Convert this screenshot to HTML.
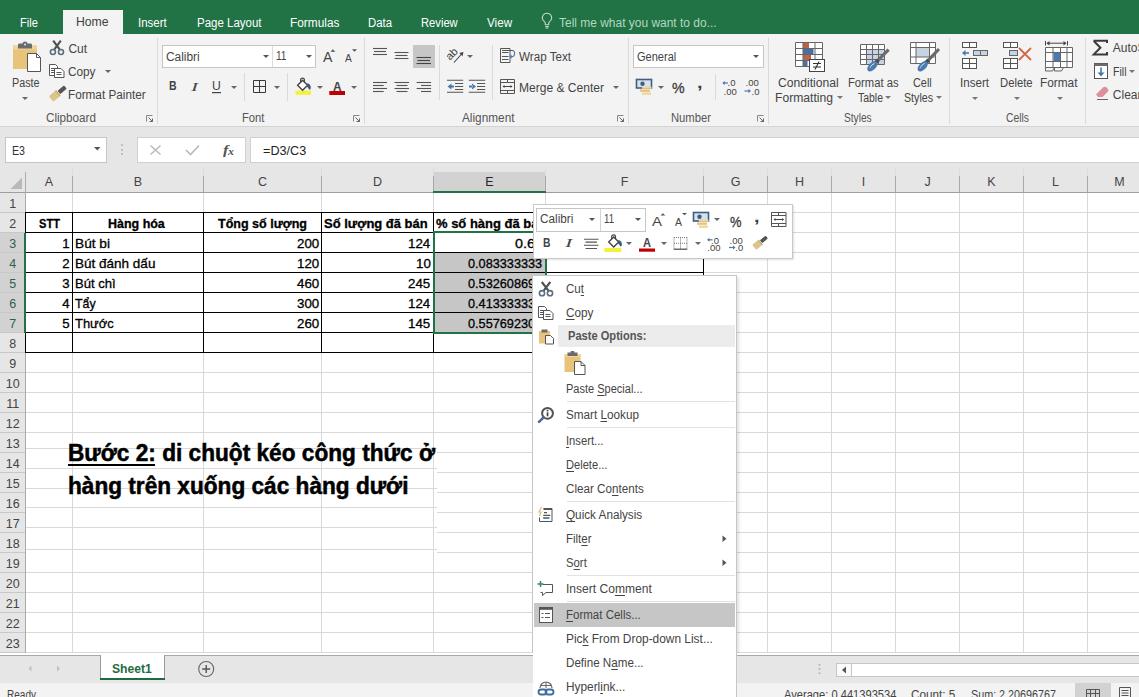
<!DOCTYPE html><html><head><meta charset="utf-8"><style>
html,body{margin:0;padding:0;width:1139px;height:697px;overflow:hidden;background:#fff;font-family:"Liberation Sans",sans-serif}
u{text-decoration-thickness:1px;text-underline-offset:2px}
</style></head><body><div style="position:relative;width:1139px;height:697px;overflow:hidden"><div style="position:absolute;left:0px;top:0px;width:1139px;height:34px;background:#217346;"></div><div style="position:absolute;left:63px;top:10px;width:60px;height:24px;background:#f3f3f3;"></div><div class="tx" id="t0" style="position:absolute;left:20.40px;top:17.00px;font-size:12.5px;line-height:1;white-space:nowrap;color:#ffffff;font-weight:normal;font-family:'Liberation Sans', sans-serif;transform-origin:0 0;transform:scaleX(0.8831);">File</div><div class="tx" id="t1" style="position:absolute;left:138.00px;top:17.00px;font-size:12.5px;line-height:1;white-space:nowrap;color:#ffffff;font-weight:normal;font-family:'Liberation Sans', sans-serif;transform-origin:0 0;transform:scaleX(0.9179);">Insert</div><div class="tx" id="t2" style="position:absolute;left:196.50px;top:17.00px;font-size:12.5px;line-height:1;white-space:nowrap;color:#ffffff;font-weight:normal;font-family:'Liberation Sans', sans-serif;transform-origin:0 0;transform:scaleX(0.9188);">Page Layout</div><div class="tx" id="t3" style="position:absolute;left:289.70px;top:17.00px;font-size:12.5px;line-height:1;white-space:nowrap;color:#ffffff;font-weight:normal;font-family:'Liberation Sans', sans-serif;transform-origin:0 0;transform:scaleX(0.9483);">Formulas</div><div class="tx" id="t4" style="position:absolute;left:368.00px;top:17.00px;font-size:12.5px;line-height:1;white-space:nowrap;color:#ffffff;font-weight:normal;font-family:'Liberation Sans', sans-serif;transform-origin:0 0;transform:scaleX(0.9089);">Data</div><div class="tx" id="t5" style="position:absolute;left:421.00px;top:17.00px;font-size:12.5px;line-height:1;white-space:nowrap;color:#ffffff;font-weight:normal;font-family:'Liberation Sans', sans-serif;transform-origin:0 0;transform:scaleX(0.8951);">Review</div><div class="tx" id="t6" style="position:absolute;left:486.60px;top:17.00px;font-size:12.5px;line-height:1;white-space:nowrap;color:#ffffff;font-weight:normal;font-family:'Liberation Sans', sans-serif;transform-origin:0 0;transform:scaleX(0.9340);">View</div><div class="tx" id="t7" style="position:absolute;left:76.40px;top:16.00px;font-size:12.5px;line-height:1;white-space:nowrap;color:#3f3f3f;font-weight:normal;font-family:'Liberation Sans', sans-serif;transform-origin:0 0;transform:scaleX(0.9777);">Home</div><svg style="position:absolute;left:541px;top:12px;" width="12" height="17" viewBox="0 0 12 17"><path d="M6 1.2a4.6 4.6 0 0 0-2.6 8.4c.6.5.9 1.1.9 1.8v1.4h3.4v-1.4c0-.7.3-1.3.9-1.8A4.6 4.6 0 0 0 6 1.2z" fill="none" stroke="#c3dccd" stroke-width="1.1"/><path d="M4.2 14.6h3.6M4.6 16h2.8" stroke="#c3dccd" stroke-width="1"/></svg><div class="tx" id="t8" style="position:absolute;left:558.90px;top:17.00px;font-size:12.5px;line-height:1;white-space:nowrap;color:#b3d7c0;font-weight:normal;font-family:'Liberation Sans', sans-serif;transform-origin:0 0;transform:scaleX(0.9571);">Tell me what you want to do...</div><div style="position:absolute;left:0px;top:34px;width:1139px;height:92px;background:#f3f3f3;"></div><div style="position:absolute;left:0px;top:126px;width:1139px;height:1px;background:#d4d4d4;"></div><div style="position:absolute;left:157px;top:38px;width:1px;height:86px;background:#dadada;"></div><div style="position:absolute;left:364px;top:38px;width:1px;height:86px;background:#dadada;"></div><div style="position:absolute;left:628px;top:38px;width:1px;height:86px;background:#dadada;"></div><div style="position:absolute;left:768px;top:38px;width:1px;height:86px;background:#dadada;"></div><div style="position:absolute;left:949px;top:38px;width:1px;height:86px;background:#dadada;"></div><div style="position:absolute;left:1085px;top:38px;width:1px;height:86px;background:#dadada;"></div><div class="tx" id="t9" style="position:absolute;left:11.50px;top:77.00px;font-size:12px;line-height:1;white-space:nowrap;color:#444;font-weight:normal;font-family:'Liberation Sans', sans-serif;transform-origin:0 0;transform:scaleX(0.8961);">Paste</div><svg style="position:absolute;left:22px;top:97.0px" width="6" height="3" viewBox="0 0 6 3"><path d="M0 0H6L3 3Z" fill="#666"/></svg><div class="tx" id="t10" style="position:absolute;left:68.40px;top:43.00px;font-size:12px;line-height:1;white-space:nowrap;color:#444;font-weight:normal;font-family:'Liberation Sans', sans-serif;transform-origin:0 0;">Cut</div><div class="tx" id="t11" style="position:absolute;left:68.40px;top:66.00px;font-size:12px;line-height:1;white-space:nowrap;color:#444;font-weight:normal;font-family:'Liberation Sans', sans-serif;transform-origin:0 0;transform:scaleX(0.9816);">Copy</div><svg style="position:absolute;left:105px;top:69.5px" width="6" height="3" viewBox="0 0 6 3"><path d="M0 0H6L3 3Z" fill="#666"/></svg><div class="tx" id="t12" style="position:absolute;left:68.40px;top:89.00px;font-size:12px;line-height:1;white-space:nowrap;color:#444;font-weight:normal;font-family:'Liberation Sans', sans-serif;transform-origin:0 0;transform:scaleX(0.9778);">Format Painter</div><div class="tx" id="t13" style="position:absolute;left:45.60px;top:112.00px;font-size:12px;line-height:1;white-space:nowrap;color:#555;font-weight:normal;font-family:'Liberation Sans', sans-serif;transform-origin:0 0;transform:scaleX(0.9713);">Clipboard</div><div style="position:absolute;left:162px;top:45px;width:154px;height:23px;box-sizing:border-box;background:#fff;border:1px solid #c6c6c6"></div><div style="position:absolute;left:272px;top:46px;width:1px;height:21px;background:#dcdcdc;"></div><div class="tx" id="t14" style="position:absolute;left:165.50px;top:51.00px;font-size:12.5px;line-height:1;white-space:nowrap;color:#444;font-weight:normal;font-family:'Liberation Sans', sans-serif;transform-origin:0 0;transform:scaleX(0.9510);">Calibri</div><svg style="position:absolute;left:262.5px;top:54.8px" width="6" height="3" viewBox="0 0 6 3"><path d="M0 0H6L3 3Z" fill="#555"/></svg><div class="tx" id="t15" style="position:absolute;left:276.40px;top:50.00px;font-size:12.5px;line-height:1;white-space:nowrap;color:#444;font-weight:normal;font-family:'Liberation Sans', sans-serif;transform-origin:0 0;transform:scaleX(0.8087);">11</div><svg style="position:absolute;left:305.5px;top:54.8px" width="6" height="3" viewBox="0 0 6 3"><path d="M0 0H6L3 3Z" fill="#555"/></svg><div class="tx" id="t16" style="position:absolute;left:322.60px;top:50.00px;font-size:14px;line-height:1;white-space:nowrap;color:#444;font-weight:normal;font-family:'Liberation Sans', sans-serif;transform-origin:0 0;transform:scaleX(1.0060);">A</div><div class="tx" id="t17" style="position:absolute;left:345.30px;top:53.00px;font-size:11px;line-height:1;white-space:nowrap;color:#444;font-weight:normal;font-family:'Liberation Sans', sans-serif;transform-origin:0 0;transform:scaleX(0.9260);">A</div><div class="tx" id="t18" style="position:absolute;left:168.70px;top:80.00px;font-size:12.5px;line-height:1;white-space:nowrap;color:#444;font-weight:bold;font-family:'Liberation Sans', sans-serif;transform-origin:0 0;transform:scaleX(0.8415);">B</div><div class="tx" id="t19" style="position:absolute;left:190.80px;top:80.00px;font-size:13px;line-height:1;white-space:nowrap;color:#444;font-weight:normal;font-family:'Liberation Serif', serif;transform-origin:0 0;transform:scaleX(1.6345);font-style:italic;">I</div><div class="tx" id="t20" style="position:absolute;left:212.00px;top:80.00px;font-size:12.5px;line-height:1;white-space:nowrap;color:#444;font-weight:normal;font-family:'Liberation Sans', sans-serif;transform-origin:0 0;transform:scaleX(0.9744);">U</div><svg style="position:absolute;left:230.5px;top:86.0px" width="6" height="3" viewBox="0 0 6 3"><path d="M0 0H6L3 3Z" fill="#666"/></svg><div style="position:absolute;left:244px;top:73px;width:1px;height:28px;background:#dadada;"></div><svg style="position:absolute;left:273.6px;top:85.5px" width="6" height="3" viewBox="0 0 6 3"><path d="M0 0H6L3 3Z" fill="#666"/></svg><div style="position:absolute;left:287px;top:73px;width:1px;height:28px;background:#dadada;"></div><svg style="position:absolute;left:316.8px;top:85.5px" width="6" height="3" viewBox="0 0 6 3"><path d="M0 0H6L3 3Z" fill="#666"/></svg><div class="tx" id="t21" style="position:absolute;left:332.80px;top:80.00px;font-size:13px;line-height:1;white-space:nowrap;color:#444;font-weight:bold;font-family:'Liberation Sans', sans-serif;transform-origin:0 0;transform:scaleX(0.9158);">A</div><svg style="position:absolute;left:351px;top:85.5px" width="6" height="3" viewBox="0 0 6 3"><path d="M0 0H6L3 3Z" fill="#666"/></svg><div class="tx" id="t22" style="position:absolute;left:241.60px;top:112.00px;font-size:12px;line-height:1;white-space:nowrap;color:#555;font-weight:normal;font-family:'Liberation Sans', sans-serif;transform-origin:0 0;transform:scaleX(0.9369);">Font</div><div style="position:absolute;left:413px;top:45px;width:22px;height:23px;background:#c6c6c6;"></div><div style="position:absolute;left:439px;top:45px;width:1px;height:55px;background:#dadada;"></div><svg style="position:absolute;left:466.7px;top:54.5px" width="6" height="3" viewBox="0 0 6 3"><path d="M0 0H6L3 3Z" fill="#666"/></svg><div style="position:absolute;left:492px;top:45px;width:1px;height:55px;background:#dadada;"></div><div class="tx" id="t23" style="position:absolute;left:519.00px;top:51.00px;font-size:12px;line-height:1;white-space:nowrap;color:#444;font-weight:normal;font-family:'Liberation Sans', sans-serif;transform-origin:0 0;transform:scaleX(0.9705);">Wrap Text</div><div class="tx" id="t24" style="position:absolute;left:519.00px;top:82.00px;font-size:12px;line-height:1;white-space:nowrap;color:#444;font-weight:normal;font-family:'Liberation Sans', sans-serif;transform-origin:0 0;transform:scaleX(1.0035);">Merge &amp; Center</div><svg style="position:absolute;left:613px;top:85.5px" width="6" height="3" viewBox="0 0 6 3"><path d="M0 0H6L3 3Z" fill="#666"/></svg><div class="tx" id="t25" style="position:absolute;left:462.00px;top:112.00px;font-size:12px;line-height:1;white-space:nowrap;color:#555;font-weight:normal;font-family:'Liberation Sans', sans-serif;transform-origin:0 0;transform:scaleX(0.9836);">Alignment</div><div style="position:absolute;left:633px;top:45px;width:131px;height:23px;box-sizing:border-box;background:#fff;border:1px solid #c6c6c6"></div><div class="tx" id="t26" style="position:absolute;left:636.60px;top:51.00px;font-size:12.5px;line-height:1;white-space:nowrap;color:#444;font-weight:normal;font-family:'Liberation Sans', sans-serif;transform-origin:0 0;transform:scaleX(0.8835);">General</div><svg style="position:absolute;left:753px;top:54.8px" width="6" height="3" viewBox="0 0 6 3"><path d="M0 0H6L3 3Z" fill="#555"/></svg><svg style="position:absolute;left:657.7px;top:85.5px" width="6" height="3" viewBox="0 0 6 3"><path d="M0 0H6L3 3Z" fill="#666"/></svg><div class="tx" id="t27" style="position:absolute;left:672.00px;top:81.00px;font-size:14.5px;line-height:1;white-space:nowrap;color:#3a3a3a;font-weight:normal;font-family:'Liberation Sans', sans-serif;transform-origin:0 0;transform:scaleX(0.9763);-webkit-text-stroke:0.3px #3a3a3a;">%</div><div class="tx" id="t28" style="position:absolute;left:697.00px;top:75.00px;font-size:15px;line-height:1;white-space:nowrap;color:#3a3a3a;font-weight:bold;font-family:'Liberation Sans', sans-serif;transform-origin:0 0;transform:scaleX(1.3184);">,</div><div style="position:absolute;left:715px;top:74px;width:1px;height:26px;background:#dadada;"></div><div class="tx" id="t29" style="position:absolute;left:670.60px;top:112.00px;font-size:12px;line-height:1;white-space:nowrap;color:#555;font-weight:normal;font-family:'Liberation Sans', sans-serif;transform-origin:0 0;transform:scaleX(0.9370);">Number</div><div class="tx" id="t30" style="position:absolute;left:778.30px;top:77.00px;font-size:12px;line-height:1;white-space:nowrap;color:#444;font-weight:normal;font-family:'Liberation Sans', sans-serif;transform-origin:0 0;transform:scaleX(1.0109);">Conditional</div><div class="tx" id="t31" style="position:absolute;left:775.30px;top:92.00px;font-size:12px;line-height:1;white-space:nowrap;color:#444;font-weight:normal;font-family:'Liberation Sans', sans-serif;transform-origin:0 0;transform:scaleX(1.0112);">Formatting</div><svg style="position:absolute;left:837px;top:96.0px" width="6" height="3" viewBox="0 0 6 3"><path d="M0 0H6L3 3Z" fill="#777"/></svg><div class="tx" id="t32" style="position:absolute;left:847.50px;top:77.00px;font-size:12px;line-height:1;white-space:nowrap;color:#444;font-weight:normal;font-family:'Liberation Sans', sans-serif;transform-origin:0 0;transform:scaleX(0.9349);">Format as</div><div class="tx" id="t33" style="position:absolute;left:857.50px;top:92.00px;font-size:12px;line-height:1;white-space:nowrap;color:#444;font-weight:normal;font-family:'Liberation Sans', sans-serif;transform-origin:0 0;transform:scaleX(0.8715);">Table</div><svg style="position:absolute;left:885px;top:96.0px" width="6" height="3" viewBox="0 0 6 3"><path d="M0 0H6L3 3Z" fill="#777"/></svg><div class="tx" id="t34" style="position:absolute;left:913.00px;top:77.00px;font-size:12px;line-height:1;white-space:nowrap;color:#444;font-weight:normal;font-family:'Liberation Sans', sans-serif;transform-origin:0 0;transform:scaleX(0.9046);">Cell</div><div class="tx" id="t35" style="position:absolute;left:904.00px;top:92.00px;font-size:12px;line-height:1;white-space:nowrap;color:#444;font-weight:normal;font-family:'Liberation Sans', sans-serif;transform-origin:0 0;transform:scaleX(0.8872);">Styles</div><svg style="position:absolute;left:936px;top:96.0px" width="6" height="3" viewBox="0 0 6 3"><path d="M0 0H6L3 3Z" fill="#777"/></svg><div class="tx" id="t36" style="position:absolute;left:844.00px;top:112.00px;font-size:12px;line-height:1;white-space:nowrap;color:#555;font-weight:normal;font-family:'Liberation Sans', sans-serif;transform-origin:0 0;transform:scaleX(0.8474);">Styles</div><div class="tx" id="t37" style="position:absolute;left:960.00px;top:77.00px;font-size:12px;line-height:1;white-space:nowrap;color:#444;font-weight:normal;font-family:'Liberation Sans', sans-serif;transform-origin:0 0;transform:scaleX(0.9662);">Insert</div><svg style="position:absolute;left:971.8px;top:96.9px" width="6" height="3" viewBox="0 0 6 3"><path d="M0 0H6L3 3Z" fill="#777"/></svg><div class="tx" id="t38" style="position:absolute;left:1000.40px;top:77.00px;font-size:12px;line-height:1;white-space:nowrap;color:#444;font-weight:normal;font-family:'Liberation Sans', sans-serif;transform-origin:0 0;transform:scaleX(0.9398);">Delete</div><svg style="position:absolute;left:1013.5px;top:96.9px" width="6" height="3" viewBox="0 0 6 3"><path d="M0 0H6L3 3Z" fill="#777"/></svg><div class="tx" id="t39" style="position:absolute;left:1040.40px;top:77.00px;font-size:12px;line-height:1;white-space:nowrap;color:#444;font-weight:normal;font-family:'Liberation Sans', sans-serif;transform-origin:0 0;transform:scaleX(0.9864);">Format</div><svg style="position:absolute;left:1056.5px;top:96.9px" width="6" height="3" viewBox="0 0 6 3"><path d="M0 0H6L3 3Z" fill="#777"/></svg><div class="tx" id="t40" style="position:absolute;left:1005.50px;top:112.00px;font-size:12px;line-height:1;white-space:nowrap;color:#555;font-weight:normal;font-family:'Liberation Sans', sans-serif;transform-origin:0 0;transform:scaleX(0.8623);">Cells</div><div class="tx" id="t41" style="position:absolute;left:1112.80px;top:42.00px;font-size:12px;line-height:1;white-space:nowrap;color:#444;font-weight:normal;font-family:'Liberation Sans', sans-serif;transform-origin:0 0;">AutoSum</div><div class="tx" id="t42" style="position:absolute;left:1112.80px;top:66.00px;font-size:12px;line-height:1;white-space:nowrap;color:#444;font-weight:normal;font-family:'Liberation Sans', sans-serif;transform-origin:0 0;transform:scaleX(0.8807);">Fill</div><svg style="position:absolute;left:1129.4px;top:69.5px" width="6" height="3" viewBox="0 0 6 3"><path d="M0 0H6L3 3Z" fill="#777"/></svg><div class="tx" id="t43" style="position:absolute;left:1112.80px;top:89.00px;font-size:12px;line-height:1;white-space:nowrap;color:#444;font-weight:normal;font-family:'Liberation Sans', sans-serif;transform-origin:0 0;">Clear</div><svg style="position:absolute;left:0;top:0" width="1139" height="697"><rect x="13" y="45.5" width="24" height="23.5" fill="#e8c37c"/><rect x="13" y="45.5" width="24" height="4" fill="#f0d49a"/><path d="M18 48.5v-3.5c0-.8.6-1.5 1.5-1.5h3c.2-1.2 1.2-2 2.5-2s2.3.8 2.5 2h3c.9 0 1.5.7 1.5 1.5v3.5z" fill="#6b6b6b"/><circle cx="25" cy="44.6" r="1" fill="#e8e8e8"/><path d="M27.5 53.5h9l4 4v14h-13z" fill="#fff" stroke="#555"/><path d="M36.5 53.5v4h4" fill="none" stroke="#555"/><path d="M53.2 40.6L59.6 49.4M60.8 40.6L54.4 49.4" stroke="#505050" stroke-width="2.1"/><circle cx="52.9" cy="52" r="2.5" fill="none" stroke="#5b6f80" stroke-width="1.6"/><circle cx="61" cy="52" r="2.5" fill="none" stroke="#5b6f80" stroke-width="1.6"/><path d="M49.5 64.5h6l2 2v9h-8z" fill="#fff" stroke="#555"/><path d="M51 68.5h4M51 70.5h4M51 72.5h4" stroke="#555"/><path d="M54.5 68.5h6.5l3 3v6h-9.5z" fill="#fff" stroke="#555"/><path d="M56.5 72.5h5M56.5 74.5h5" stroke="#555"/><g transform="translate(58.5 92.8) rotate(-40)"><rect x="0.5" y="-2.2" width="8.5" height="4.4" rx="1" fill="#555"/><path d="M-8.5 -3.6h8.5v7.2h-8.5c-.8 0-1.2-.5-1.2-1.1v-5c0-.6.4-1.1 1.2-1.1z" fill="#dcc48e"/><path d="M-.8 -3.6v7.2" stroke="#c9ad6e" stroke-width="1.2"/></g><path d="M146.5 121.5v-6h6" fill="none" stroke="#888"/><path d="M148.5 117.5l4 4M149.5 121.5h3v-3" fill="none" stroke="#666"/><path d="M330.5 51.7l2.4-2.4 2.4 2.4z" fill="#555"/><path d="M352 49.2h5l-2.5 2.5z" fill="#555"/><rect x="212" y="92" width="9" height="1.2" fill="#444"/><path d="M253.5 80.5h12v12h-12zM259.5 80.5v12M253.5 86.5h12" fill="none" stroke="#3a3a3a"/><rect x="295.5" y="90.6" width="15.5" height="4.2" fill="#f2f23c"/><path d="M297.6 85.3l5-5 5 5-5 5z" fill="#fff" stroke="#444" stroke-width="1.4"/><path d="M300.6 82.2v-2.4c0-1.1.9-1.7 1.9-1.7s1.9.6 1.9 1.7v2.6" fill="none" stroke="#444" stroke-width="1.2"/><path d="M307.3 83.3c2.2.5 3.5 2.2 3.5 4.2 0 1.3-.7 2.3-1.5 2.3-.6-1.2-1.2-2.3-2.6-3.3z" fill="#3c5a78"/><rect x="329.3" y="91" width="15.7" height="4" fill="#c00000"/><path d="M353.5 121.5v-6h6" fill="none" stroke="#888"/><path d="M355.5 117.5l4 4M356.5 121.5h3v-3" fill="none" stroke="#666"/><path d="M373 48.5H387" stroke="#555" stroke-width="1.1"/><path d="M374 51.5H386" stroke="#555" stroke-width="1.1"/><path d="M373 54.5H387" stroke="#555" stroke-width="1.1"/><path d="M394.5 52.5H408.5" stroke="#555" stroke-width="1.1"/><path d="M395.5 55.5H407.5" stroke="#555" stroke-width="1.1"/><path d="M394.5 58.5H408.5" stroke="#555" stroke-width="1.1"/><path d="M416.5 57.5H431" stroke="#444" stroke-width="1.1"/><path d="M417.5 60.5H430" stroke="#444" stroke-width="1.1"/><path d="M416.5 63.5H431" stroke="#444" stroke-width="1.1"/><text x="0" y="0" transform="translate(450 60.8) rotate(-45)" font-family="Liberation Sans" font-size="11" fill="#3a3a3a">ab</text><path d="M454 62.5L462.5 53" stroke="#444" stroke-width="1.1"/><path d="M463.5 52l-4.2 1 3.2 3.2z" fill="#444"/><path d="M500.5 48.5h9.5v14h-9.5z" fill="none" stroke="#555"/><path d="M502 50.5h11.5M502 52.5h6.5M502 56.5h6.5M502 59.5h6.5" stroke="#555" stroke-width="1"/><path d="M513.3 50.8c1.8.8 1.8 5.2-.5 5.8h-2.3" fill="none" stroke="#4d7bab" stroke-width="1.2"/><path d="M509.3 56.6l2.3-2.1v4.2z" fill="#4d7bab"/><path d="M373 82.5H387" stroke="#555" stroke-width="1.1"/><path d="M373 85.5H383.7" stroke="#555" stroke-width="1.1"/><path d="M373 88.5H387" stroke="#555" stroke-width="1.1"/><path d="M373 91.5H383.7" stroke="#555" stroke-width="1.1"/><path d="M394.5 82.5H409" stroke="#555" stroke-width="1.1"/><path d="M396.5 85.5H407.5" stroke="#555" stroke-width="1.1"/><path d="M394.5 88.5H409" stroke="#555" stroke-width="1.1"/><path d="M396.5 91.5H407.5" stroke="#555" stroke-width="1.1"/><path d="M416.6 82.5H431.1" stroke="#555" stroke-width="1.1"/><path d="M421 85.5H431.1" stroke="#555" stroke-width="1.1"/><path d="M416.6 88.5H431.1" stroke="#555" stroke-width="1.1"/><path d="M421 91.5H431.1" stroke="#555" stroke-width="1.1"/><path d="M447 80.3h16.2M455 83.5h8.2M455 86.5h8.2M455 89.5h8.2M447 92.2h16.2" stroke="#555" stroke-width="1.1"/><path d="M447.5 86.5l4-3v6z M451 85.6h3v1.8h-3z" fill="#4a7aa8"/><path d="M468.8 80.3h16.4M477 83.5h8.2M477 86.5h8.2M477 89.5h8.2M468.8 92.2h16.4" stroke="#555" stroke-width="1.1"/><path d="M476 86.5l-4-3v6z M469 85.6h3.5v1.8H469z" fill="#4a7aa8"/><path d="M500.5 79.5h14v14h-14zM500.5 82.5h14M500.5 90.5h14M507.5 79.5v3M507.5 90.5v3" fill="none" stroke="#555"/><path d="M503 86.5h9" stroke="#444"/><path d="M502.5 86.5l2-1.6v3.2zM512.5 86.5l-2-1.6v3.2z" fill="#444"/><path d="M617.5 121.5v-6h6" fill="none" stroke="#888"/><path d="M619.5 117.5l4 4M620.5 121.5h3v-3" fill="none" stroke="#666"/><rect x="636.5" y="79.5" width="15" height="8.5" fill="#d6e3ee" stroke="#3f5f7f" stroke-width="1.6"/><circle cx="642.5" cy="83.7" r="2.2" fill="#3f5f7f"/><rect x="642" y="86.5" width="9.5" height="2.3" fill="#f0d49a"/><rect x="640" y="89.5" width="10" height="2.3" fill="#e8c37c"/><rect x="642" y="92.5" width="9" height="2.3" fill="#f0d49a"/><text x="727.5" y="86.3" font-family="Liberation Sans" font-size="9.5" fill="#444">.0</text><text x="723.5" y="94.5" font-family="Liberation Sans" font-size="9.5" fill="#444">.00</text><path d="M723 83h5" stroke="#4a7aa8" stroke-width="1.2"/><path d="M722.3 83l2.5-2v4z" fill="#4a7aa8"/><text x="745.5" y="86.3" font-family="Liberation Sans" font-size="9.5" fill="#444">.00</text><text x="751.5" y="94.5" font-family="Liberation Sans" font-size="9.5" fill="#444">.0</text><path d="M744.5 91h5" stroke="#4a7aa8" stroke-width="1.2"/><path d="M751 91l-2.5-2v4z" fill="#4a7aa8"/><path d="M757.5 121.5v-6h6" fill="none" stroke="#888"/><path d="M759.5 117.5l4 4M760.5 121.5h3v-3" fill="none" stroke="#666"/><rect x="795.5" y="42.5" width="27" height="24" fill="#fff"/><rect x="803" y="42.5" width="6" height="6" fill="#c0604a"/><rect x="803" y="48.5" width="10.5" height="6" fill="#4a6fa5"/><rect x="803" y="54.5" width="8" height="6" fill="#c0604a"/><rect x="803" y="60.5" width="4.5" height="6" fill="#4a6fa5"/><path d="M795.5 42.5V66.5" stroke="#666" stroke-width="1"/><path d="M803 42.5V66.5" stroke="#666" stroke-width="1"/><path d="M815 42.5V66.5" stroke="#666" stroke-width="1"/><path d="M822.5 42.5V66.5" stroke="#666" stroke-width="1"/><path d="M795.5 42.5H822.5" stroke="#666" stroke-width="1"/><path d="M795.5 48.5H822.5" stroke="#666" stroke-width="1"/><path d="M795.5 54.5H822.5" stroke="#666" stroke-width="1"/><path d="M795.5 60.5H822.5" stroke="#666" stroke-width="1"/><path d="M795.5 66.5H822.5" stroke="#666" stroke-width="1"/><rect x="809.5" y="59.5" width="15" height="12" fill="#fff" stroke="#444"/><path d="M813 63.5h8M813 67h8M819 61.5l-4 8" stroke="#333" stroke-width="1.1"/><rect x="860.5" y="44.5" width="24" height="20" fill="#fff"/><rect x="866.5" y="49.5" width="18" height="15" fill="#c5d3e2"/><path d="M860.5 44.5V64.5" stroke="#666" stroke-width="1"/><path d="M866.5 44.5V64.5" stroke="#666" stroke-width="1"/><path d="M872.5 44.5V64.5" stroke="#666" stroke-width="1"/><path d="M878.5 44.5V64.5" stroke="#666" stroke-width="1"/><path d="M884.5 44.5V64.5" stroke="#666" stroke-width="1"/><path d="M860.5 44.5H884.5" stroke="#666" stroke-width="1"/><path d="M860.5 49.5H884.5" stroke="#666" stroke-width="1"/><path d="M860.5 54.5H884.5" stroke="#666" stroke-width="1"/><path d="M860.5 59.5H884.5" stroke="#666" stroke-width="1"/><path d="M860.5 64.5H884.5" stroke="#666" stroke-width="1"/><path d="M888.6 49.6L876.4 61.8" stroke="#6b6b6b" stroke-width="3.2"/><path d="M878.1999999999999 60.0L875.1999999999999 63.0" stroke="#4a4a4a" stroke-width="3.6"/><ellipse cx="872.4" cy="66.3" rx="6.3" ry="3.6" transform="rotate(-45 872.4 66.3)" fill="#4a7ab0"/><path d="M869.9 67.8c1-2 2.5-3.5 4.5-4.3" stroke="#d8e6f2" stroke-width="1" fill="none"/><rect x="910.5" y="42.5" width="25" height="21" fill="#fff"/><rect x="916" y="47.5" width="13.5" height="9.5" fill="#c5d3e2"/><path d="M910.5 42.5V63.5" stroke="#666" stroke-width="1"/><path d="M916 42.5V63.5" stroke="#666" stroke-width="1"/><path d="M929.5 42.5V63.5" stroke="#666" stroke-width="1"/><path d="M935.5 42.5V63.5" stroke="#666" stroke-width="1"/><path d="M910.5 42.5H935.5" stroke="#666" stroke-width="1"/><path d="M910.5 47.5H935.5" stroke="#666" stroke-width="1"/><path d="M910.5 57H935.5" stroke="#666" stroke-width="1"/><path d="M910.5 63.5H935.5" stroke="#666" stroke-width="1"/><path d="M939 49L926.7 61.8" stroke="#6b6b6b" stroke-width="3.2"/><path d="M928.5 60.0L925.5 63.0" stroke="#4a4a4a" stroke-width="3.6"/><ellipse cx="922.7" cy="66.3" rx="6.3" ry="3.6" transform="rotate(-45 922.7 66.3)" fill="#4a7ab0"/><path d="M920.2 67.8c1-2 2.5-3.5 4.5-4.3" stroke="#d8e6f2" stroke-width="1" fill="none"/><rect x="962.5" y="42.5" width="14" height="5" fill="#fff" stroke="#555"/><path d="M969.5 42.5v5" stroke="#555"/><rect x="973.5" y="50.5" width="14" height="5" fill="#c5d3e2" stroke="#666"/><path d="M980.5 50.5v5" stroke="#666"/><path d="M963 53h6" stroke="#4a7aa8" stroke-width="1.6"/><path d="M962 53l3.5-3v6z" fill="#4a7aa8"/><rect x="962.5" y="58.5" width="14" height="10" fill="#fff" stroke="#555"/><path d="M969.5 58.5v10M962.5 63.5h14" stroke="#555"/><rect x="1003.5" y="42.5" width="14" height="5" fill="#fff" stroke="#555"/><path d="M1010.5 42.5v5" stroke="#555"/><rect x="1009.5" y="50.5" width="8" height="5" fill="#c5d3e2" stroke="#666"/><rect x="1003.5" y="58.5" width="14" height="10" fill="#fff" stroke="#555"/><path d="M1010.5 58.5v10M1003.5 63.5h14" stroke="#555"/><path d="M1019 48l12 12M1031 48l-12 12" stroke="#d2694a" stroke-width="1.8"/><path d="M1045.5 41v4.5M1067.5 41v4.5M1047 43.2h19" stroke="#444" stroke-width="1"/><path d="M1046.5 43.2l3-2.2v4.4zM1066.5 43.2l-3-2.2v4.4z" fill="#444"/><rect x="1045.5" y="47.5" width="27" height="20" fill="#fff"/><rect x="1053.5" y="52.5" width="7" height="9" fill="#4a7ab0"/><path d="M1045.5 47.5V67.5" stroke="#666" stroke-width="1"/><path d="M1053 47.5V67.5" stroke="#666" stroke-width="1"/><path d="M1060.5 47.5V67.5" stroke="#666" stroke-width="1"/><path d="M1067 47.5V67.5" stroke="#666" stroke-width="1"/><path d="M1072.5 47.5V67.5" stroke="#666" stroke-width="1"/><path d="M1045.5 47.5H1072.5" stroke="#666" stroke-width="1"/><path d="M1045.5 52.5H1072.5" stroke="#666" stroke-width="1"/><path d="M1045.5 61.5H1072.5" stroke="#666" stroke-width="1"/><path d="M1045.5 67.5H1072.5" stroke="#666" stroke-width="1"/><path d="M1045.5 67.5v3.5h7l2-3.5M1054.5 67.5v3.5h7l2-3.5" fill="none" stroke="#666"/><path d="M1093.5 40.8h13.5v2.3M1093.8 41l6.6 6.8-6.6 6.6h13.2v-2.3" fill="none" stroke="#3a3a3a" stroke-width="2" stroke-linejoin="miter"/><rect x="1094.5" y="63.5" width="13" height="15" fill="#fff" stroke="#555"/><rect x="1094.5" y="63.5" width="13" height="2.5" fill="#6b6b6b"/><path d="M1101 67.5v7" stroke="#3f79a8" stroke-width="1.6"/><path d="M1097.5 72.5l3.5 4 3.5-4z" fill="#3f79a8"/><path d="M1096 94.5l7-7c1-1 2.5-1 3.5 0l1 1c1 1 1 2.5 0 3.5l-5 5h-4.5z" fill="#dd8f9e"/><path d="M1097 99.5h11" stroke="#666" stroke-width="1"/></svg><div style="position:absolute;left:0px;top:127px;width:1139px;height:45px;background:#e6e6e6;"></div><div style="position:absolute;left:5px;top:137px;width:102px;height:26px;box-sizing:border-box;background:#fff;border:1px solid #c6c6c6"></div><div class="tx" id="t44" style="position:absolute;left:12.30px;top:145.00px;font-size:12.5px;line-height:1;white-space:nowrap;color:#333;font-weight:normal;font-family:'Liberation Sans', sans-serif;transform-origin:0 0;transform:scaleX(0.8498);">E3</div><svg style="position:absolute;left:94px;top:147px" width="7" height="4"><path d="M0 0h6.5L3.25 3.5z" fill="#555"/></svg><div style="position:absolute;left:121px;top:144.3px;width:2px;height:2px;background:#b3b3b3;border-radius:1px"></div><div style="position:absolute;left:121px;top:148.5px;width:2px;height:2px;background:#b3b3b3;border-radius:1px"></div><div style="position:absolute;left:121px;top:152.7px;width:2px;height:2px;background:#b3b3b3;border-radius:1px"></div><div style="position:absolute;left:137px;top:137px;width:109px;height:26px;box-sizing:border-box;background:#fff;border:1px solid #d0d0d0"></div><div style="position:absolute;left:250px;top:137px;width:891px;height:26px;box-sizing:border-box;background:#fff;border:1px solid #d0d0d0"></div><svg style="position:absolute;left:0;top:0" width="1139" height="697"><path d="M150.5 145.5l10 9M160.5 145.5l-10 9" stroke="#b8b8b8" stroke-width="1.4"/><path d="M186 150l4.5 4.5 8.5-9" fill="none" stroke="#b8b8b8" stroke-width="1.6"/></svg><div class="tx" id="t45" style="position:absolute;left:222.50px;top:143.00px;font-size:13px;line-height:1;white-space:nowrap;color:#555;font-weight:bold;font-family:'Liberation Serif', serif;transform-origin:0 0;transform:scaleX(1.2662);font-style:italic;">f</div><div class="tx" id="t46" style="position:absolute;left:227.50px;top:147.00px;font-size:10px;line-height:1;white-space:nowrap;color:#555;font-weight:bold;font-family:'Liberation Serif', serif;transform-origin:0 0;transform:scaleX(1.2000);font-style:italic;">x</div><div class="tx" id="t47" style="position:absolute;left:262.50px;top:145.00px;font-size:12.5px;line-height:1;white-space:nowrap;color:#222;font-weight:normal;font-family:'Liberation Sans', sans-serif;transform-origin:0 0;transform:scaleX(1.0109);">=D3/C3</div><div style="position:absolute;left:0px;top:172px;width:1139px;height:483px;background:#ffffff;"></div><div style="position:absolute;left:0px;top:172px;width:1139px;height:20px;background:#e6e6e6;"></div><div style="position:absolute;left:0px;top:192px;width:25px;height:463px;background:#e6e6e6;"></div><div style="position:absolute;left:434px;top:172px;width:111px;height:20px;background:#d2d2d2;"></div><div style="position:absolute;left:0px;top:233px;width:25px;height:100px;background:#d2d2d2;"></div><div style="position:absolute;left:26px;top:212px;width:1113px;height:1px;background:#d9d9d9;"></div><div style="position:absolute;left:0px;top:212px;width:25px;height:1px;background:#c8c8c8;"></div><div style="position:absolute;left:26px;top:232px;width:1113px;height:1px;background:#d9d9d9;"></div><div style="position:absolute;left:0px;top:232px;width:25px;height:1px;background:#c8c8c8;"></div><div style="position:absolute;left:26px;top:252px;width:1113px;height:1px;background:#d9d9d9;"></div><div style="position:absolute;left:0px;top:252px;width:25px;height:1px;background:#c8c8c8;"></div><div style="position:absolute;left:26px;top:272px;width:1113px;height:1px;background:#d9d9d9;"></div><div style="position:absolute;left:0px;top:272px;width:25px;height:1px;background:#c8c8c8;"></div><div style="position:absolute;left:26px;top:292px;width:1113px;height:1px;background:#d9d9d9;"></div><div style="position:absolute;left:0px;top:292px;width:25px;height:1px;background:#c8c8c8;"></div><div style="position:absolute;left:26px;top:312px;width:1113px;height:1px;background:#d9d9d9;"></div><div style="position:absolute;left:0px;top:312px;width:25px;height:1px;background:#c8c8c8;"></div><div style="position:absolute;left:26px;top:332px;width:1113px;height:1px;background:#d9d9d9;"></div><div style="position:absolute;left:0px;top:332px;width:25px;height:1px;background:#c8c8c8;"></div><div style="position:absolute;left:26px;top:352px;width:1113px;height:1px;background:#d9d9d9;"></div><div style="position:absolute;left:0px;top:352px;width:25px;height:1px;background:#c8c8c8;"></div><div style="position:absolute;left:26px;top:372px;width:1113px;height:1px;background:#d9d9d9;"></div><div style="position:absolute;left:0px;top:372px;width:25px;height:1px;background:#c8c8c8;"></div><div style="position:absolute;left:26px;top:392px;width:1113px;height:1px;background:#d9d9d9;"></div><div style="position:absolute;left:0px;top:392px;width:25px;height:1px;background:#c8c8c8;"></div><div style="position:absolute;left:26px;top:412px;width:1113px;height:1px;background:#d9d9d9;"></div><div style="position:absolute;left:0px;top:412px;width:25px;height:1px;background:#c8c8c8;"></div><div style="position:absolute;left:26px;top:432px;width:1113px;height:1px;background:#d9d9d9;"></div><div style="position:absolute;left:0px;top:432px;width:25px;height:1px;background:#c8c8c8;"></div><div style="position:absolute;left:26px;top:452px;width:1113px;height:1px;background:#d9d9d9;"></div><div style="position:absolute;left:0px;top:452px;width:25px;height:1px;background:#c8c8c8;"></div><div style="position:absolute;left:26px;top:472px;width:1113px;height:1px;background:#d9d9d9;"></div><div style="position:absolute;left:0px;top:472px;width:25px;height:1px;background:#c8c8c8;"></div><div style="position:absolute;left:26px;top:492px;width:1113px;height:1px;background:#d9d9d9;"></div><div style="position:absolute;left:0px;top:492px;width:25px;height:1px;background:#c8c8c8;"></div><div style="position:absolute;left:26px;top:512px;width:1113px;height:1px;background:#d9d9d9;"></div><div style="position:absolute;left:0px;top:512px;width:25px;height:1px;background:#c8c8c8;"></div><div style="position:absolute;left:26px;top:532px;width:1113px;height:1px;background:#d9d9d9;"></div><div style="position:absolute;left:0px;top:532px;width:25px;height:1px;background:#c8c8c8;"></div><div style="position:absolute;left:26px;top:552px;width:1113px;height:1px;background:#d9d9d9;"></div><div style="position:absolute;left:0px;top:552px;width:25px;height:1px;background:#c8c8c8;"></div><div style="position:absolute;left:26px;top:572px;width:1113px;height:1px;background:#d9d9d9;"></div><div style="position:absolute;left:0px;top:572px;width:25px;height:1px;background:#c8c8c8;"></div><div style="position:absolute;left:26px;top:592px;width:1113px;height:1px;background:#d9d9d9;"></div><div style="position:absolute;left:0px;top:592px;width:25px;height:1px;background:#c8c8c8;"></div><div style="position:absolute;left:26px;top:612px;width:1113px;height:1px;background:#d9d9d9;"></div><div style="position:absolute;left:0px;top:612px;width:25px;height:1px;background:#c8c8c8;"></div><div style="position:absolute;left:26px;top:632px;width:1113px;height:1px;background:#d9d9d9;"></div><div style="position:absolute;left:0px;top:632px;width:25px;height:1px;background:#c8c8c8;"></div><div style="position:absolute;left:26px;top:652px;width:1113px;height:1px;background:#d9d9d9;"></div><div style="position:absolute;left:0px;top:652px;width:25px;height:1px;background:#c8c8c8;"></div><div style="position:absolute;left:72px;top:193px;width:1px;height:462px;background:#d9d9d9;"></div><div style="position:absolute;left:72px;top:168px;width:1px;height:8px;background:#dcdcdc;"></div><div style="position:absolute;left:72px;top:176px;width:1px;height:16px;background:#a8a8a8;"></div><div style="position:absolute;left:203px;top:193px;width:1px;height:462px;background:#d9d9d9;"></div><div style="position:absolute;left:203px;top:168px;width:1px;height:8px;background:#dcdcdc;"></div><div style="position:absolute;left:203px;top:176px;width:1px;height:16px;background:#a8a8a8;"></div><div style="position:absolute;left:321px;top:193px;width:1px;height:462px;background:#d9d9d9;"></div><div style="position:absolute;left:321px;top:168px;width:1px;height:8px;background:#dcdcdc;"></div><div style="position:absolute;left:321px;top:176px;width:1px;height:16px;background:#a8a8a8;"></div><div style="position:absolute;left:433px;top:193px;width:1px;height:462px;background:#d9d9d9;"></div><div style="position:absolute;left:433px;top:168px;width:1px;height:8px;background:#dcdcdc;"></div><div style="position:absolute;left:433px;top:176px;width:1px;height:16px;background:#a8a8a8;"></div><div style="position:absolute;left:545px;top:193px;width:1px;height:462px;background:#d9d9d9;"></div><div style="position:absolute;left:545px;top:168px;width:1px;height:8px;background:#dcdcdc;"></div><div style="position:absolute;left:545px;top:176px;width:1px;height:16px;background:#a8a8a8;"></div><div style="position:absolute;left:703px;top:193px;width:1px;height:462px;background:#d9d9d9;"></div><div style="position:absolute;left:703px;top:168px;width:1px;height:8px;background:#dcdcdc;"></div><div style="position:absolute;left:703px;top:176px;width:1px;height:16px;background:#a8a8a8;"></div><div style="position:absolute;left:767px;top:193px;width:1px;height:462px;background:#d9d9d9;"></div><div style="position:absolute;left:767px;top:168px;width:1px;height:8px;background:#dcdcdc;"></div><div style="position:absolute;left:767px;top:176px;width:1px;height:16px;background:#a8a8a8;"></div><div style="position:absolute;left:831px;top:193px;width:1px;height:462px;background:#d9d9d9;"></div><div style="position:absolute;left:831px;top:168px;width:1px;height:8px;background:#dcdcdc;"></div><div style="position:absolute;left:831px;top:176px;width:1px;height:16px;background:#a8a8a8;"></div><div style="position:absolute;left:895px;top:193px;width:1px;height:462px;background:#d9d9d9;"></div><div style="position:absolute;left:895px;top:168px;width:1px;height:8px;background:#dcdcdc;"></div><div style="position:absolute;left:895px;top:176px;width:1px;height:16px;background:#a8a8a8;"></div><div style="position:absolute;left:959px;top:193px;width:1px;height:462px;background:#d9d9d9;"></div><div style="position:absolute;left:959px;top:168px;width:1px;height:8px;background:#dcdcdc;"></div><div style="position:absolute;left:959px;top:176px;width:1px;height:16px;background:#a8a8a8;"></div><div style="position:absolute;left:1023px;top:193px;width:1px;height:462px;background:#d9d9d9;"></div><div style="position:absolute;left:1023px;top:168px;width:1px;height:8px;background:#dcdcdc;"></div><div style="position:absolute;left:1023px;top:176px;width:1px;height:16px;background:#a8a8a8;"></div><div style="position:absolute;left:1087px;top:193px;width:1px;height:462px;background:#d9d9d9;"></div><div style="position:absolute;left:1087px;top:168px;width:1px;height:8px;background:#dcdcdc;"></div><div style="position:absolute;left:1087px;top:176px;width:1px;height:16px;background:#a8a8a8;"></div><div style="position:absolute;left:1151px;top:193px;width:1px;height:462px;background:#d9d9d9;"></div><div style="position:absolute;left:1151px;top:168px;width:1px;height:8px;background:#dcdcdc;"></div><div style="position:absolute;left:1151px;top:176px;width:1px;height:16px;background:#a8a8a8;"></div><div style="position:absolute;left:0px;top:192px;width:1139px;height:1px;background:#9e9e9e;"></div><svg style="position:absolute;left:0;top:0" width="40" height="200"><path d="M22 177.5V189H10.5z" fill="#b9b9b9"/></svg><div style="position:absolute;left:25px;top:172px;width:1px;height:483px;background:#ababab;"></div><div class="tx" id="t48" style="position:absolute;left:44.83px;top:176.00px;font-size:12.5px;line-height:1;white-space:nowrap;color:#444;font-weight:normal;font-family:'Liberation Sans', sans-serif;transform-origin:0 0;">A</div><div class="tx" id="t49" style="position:absolute;left:133.83px;top:176.00px;font-size:12.5px;line-height:1;white-space:nowrap;color:#444;font-weight:normal;font-family:'Liberation Sans', sans-serif;transform-origin:0 0;">B</div><div class="tx" id="t50" style="position:absolute;left:257.98px;top:176.00px;font-size:12.5px;line-height:1;white-space:nowrap;color:#444;font-weight:normal;font-family:'Liberation Sans', sans-serif;transform-origin:0 0;">C</div><div class="tx" id="t51" style="position:absolute;left:372.98px;top:176.00px;font-size:12.5px;line-height:1;white-space:nowrap;color:#444;font-weight:normal;font-family:'Liberation Sans', sans-serif;transform-origin:0 0;">D</div><div class="tx" id="t52" style="position:absolute;left:485.33px;top:176.00px;font-size:12.5px;line-height:1;white-space:nowrap;color:#262626;font-weight:normal;font-family:'Liberation Sans', sans-serif;transform-origin:0 0;">E</div><div class="tx" id="t53" style="position:absolute;left:620.68px;top:176.00px;font-size:12.5px;line-height:1;white-space:nowrap;color:#444;font-weight:normal;font-family:'Liberation Sans', sans-serif;transform-origin:0 0;">F</div><div class="tx" id="t54" style="position:absolute;left:730.63px;top:176.00px;font-size:12.5px;line-height:1;white-space:nowrap;color:#444;font-weight:normal;font-family:'Liberation Sans', sans-serif;transform-origin:0 0;">G</div><div class="tx" id="t55" style="position:absolute;left:794.98px;top:176.00px;font-size:12.5px;line-height:1;white-space:nowrap;color:#444;font-weight:normal;font-family:'Liberation Sans', sans-serif;transform-origin:0 0;">H</div><div class="tx" id="t56" style="position:absolute;left:861.76px;top:176.00px;font-size:12.5px;line-height:1;white-space:nowrap;color:#444;font-weight:normal;font-family:'Liberation Sans', sans-serif;transform-origin:0 0;">I</div><div class="tx" id="t57" style="position:absolute;left:924.38px;top:176.00px;font-size:12.5px;line-height:1;white-space:nowrap;color:#444;font-weight:normal;font-family:'Liberation Sans', sans-serif;transform-origin:0 0;">J</div><div class="tx" id="t58" style="position:absolute;left:987.33px;top:176.00px;font-size:12.5px;line-height:1;white-space:nowrap;color:#444;font-weight:normal;font-family:'Liberation Sans', sans-serif;transform-origin:0 0;">K</div><div class="tx" id="t59" style="position:absolute;left:1052.02px;top:176.00px;font-size:12.5px;line-height:1;white-space:nowrap;color:#444;font-weight:normal;font-family:'Liberation Sans', sans-serif;transform-origin:0 0;">L</div><div class="tx" id="t60" style="position:absolute;left:1114.29px;top:176.00px;font-size:12.5px;line-height:1;white-space:nowrap;color:#444;font-weight:normal;font-family:'Liberation Sans', sans-serif;transform-origin:0 0;">M</div><div class="tx" id="t61" style="position:absolute;left:9.32px;top:198.00px;font-size:12.5px;line-height:1;white-space:nowrap;color:#444;font-weight:normal;font-family:'Liberation Sans', sans-serif;transform-origin:0 0;">1</div><div class="tx" id="t62" style="position:absolute;left:9.32px;top:218.00px;font-size:12.5px;line-height:1;white-space:nowrap;color:#444;font-weight:normal;font-family:'Liberation Sans', sans-serif;transform-origin:0 0;">2</div><div class="tx" id="t63" style="position:absolute;left:9.32px;top:238.00px;font-size:12.5px;line-height:1;white-space:nowrap;color:#335f47;font-weight:normal;font-family:'Liberation Sans', sans-serif;transform-origin:0 0;">3</div><div class="tx" id="t64" style="position:absolute;left:9.32px;top:258.00px;font-size:12.5px;line-height:1;white-space:nowrap;color:#335f47;font-weight:normal;font-family:'Liberation Sans', sans-serif;transform-origin:0 0;">4</div><div class="tx" id="t65" style="position:absolute;left:9.32px;top:278.00px;font-size:12.5px;line-height:1;white-space:nowrap;color:#335f47;font-weight:normal;font-family:'Liberation Sans', sans-serif;transform-origin:0 0;">5</div><div class="tx" id="t66" style="position:absolute;left:9.32px;top:298.00px;font-size:12.5px;line-height:1;white-space:nowrap;color:#335f47;font-weight:normal;font-family:'Liberation Sans', sans-serif;transform-origin:0 0;">6</div><div class="tx" id="t67" style="position:absolute;left:9.32px;top:318.00px;font-size:12.5px;line-height:1;white-space:nowrap;color:#335f47;font-weight:normal;font-family:'Liberation Sans', sans-serif;transform-origin:0 0;">7</div><div class="tx" id="t68" style="position:absolute;left:9.32px;top:338.00px;font-size:12.5px;line-height:1;white-space:nowrap;color:#444;font-weight:normal;font-family:'Liberation Sans', sans-serif;transform-origin:0 0;">8</div><div class="tx" id="t69" style="position:absolute;left:9.32px;top:358.00px;font-size:12.5px;line-height:1;white-space:nowrap;color:#444;font-weight:normal;font-family:'Liberation Sans', sans-serif;transform-origin:0 0;">9</div><div class="tx" id="t70" style="position:absolute;left:5.85px;top:378.00px;font-size:12.5px;line-height:1;white-space:nowrap;color:#444;font-weight:normal;font-family:'Liberation Sans', sans-serif;transform-origin:0 0;">10</div><div class="tx" id="t71" style="position:absolute;left:6.31px;top:398.00px;font-size:12.5px;line-height:1;white-space:nowrap;color:#444;font-weight:normal;font-family:'Liberation Sans', sans-serif;transform-origin:0 0;">11</div><div class="tx" id="t72" style="position:absolute;left:5.85px;top:418.00px;font-size:12.5px;line-height:1;white-space:nowrap;color:#444;font-weight:normal;font-family:'Liberation Sans', sans-serif;transform-origin:0 0;">12</div><div class="tx" id="t73" style="position:absolute;left:5.85px;top:438.00px;font-size:12.5px;line-height:1;white-space:nowrap;color:#444;font-weight:normal;font-family:'Liberation Sans', sans-serif;transform-origin:0 0;">13</div><div class="tx" id="t74" style="position:absolute;left:5.85px;top:458.00px;font-size:12.5px;line-height:1;white-space:nowrap;color:#444;font-weight:normal;font-family:'Liberation Sans', sans-serif;transform-origin:0 0;">14</div><div class="tx" id="t75" style="position:absolute;left:5.85px;top:478.00px;font-size:12.5px;line-height:1;white-space:nowrap;color:#444;font-weight:normal;font-family:'Liberation Sans', sans-serif;transform-origin:0 0;">15</div><div class="tx" id="t76" style="position:absolute;left:5.85px;top:498.00px;font-size:12.5px;line-height:1;white-space:nowrap;color:#444;font-weight:normal;font-family:'Liberation Sans', sans-serif;transform-origin:0 0;">16</div><div class="tx" id="t77" style="position:absolute;left:5.85px;top:518.00px;font-size:12.5px;line-height:1;white-space:nowrap;color:#444;font-weight:normal;font-family:'Liberation Sans', sans-serif;transform-origin:0 0;">17</div><div class="tx" id="t78" style="position:absolute;left:5.85px;top:538.00px;font-size:12.5px;line-height:1;white-space:nowrap;color:#444;font-weight:normal;font-family:'Liberation Sans', sans-serif;transform-origin:0 0;">18</div><div class="tx" id="t79" style="position:absolute;left:5.85px;top:558.00px;font-size:12.5px;line-height:1;white-space:nowrap;color:#444;font-weight:normal;font-family:'Liberation Sans', sans-serif;transform-origin:0 0;">19</div><div class="tx" id="t80" style="position:absolute;left:5.85px;top:578.00px;font-size:12.5px;line-height:1;white-space:nowrap;color:#444;font-weight:normal;font-family:'Liberation Sans', sans-serif;transform-origin:0 0;">20</div><div class="tx" id="t81" style="position:absolute;left:5.85px;top:598.00px;font-size:12.5px;line-height:1;white-space:nowrap;color:#444;font-weight:normal;font-family:'Liberation Sans', sans-serif;transform-origin:0 0;">21</div><div class="tx" id="t82" style="position:absolute;left:5.85px;top:618.00px;font-size:12.5px;line-height:1;white-space:nowrap;color:#444;font-weight:normal;font-family:'Liberation Sans', sans-serif;transform-origin:0 0;">22</div><div class="tx" id="t83" style="position:absolute;left:5.85px;top:638.00px;font-size:12.5px;line-height:1;white-space:nowrap;color:#444;font-weight:normal;font-family:'Liberation Sans', sans-serif;transform-origin:0 0;">23</div><div class="tx" id="t84" style="position:absolute;left:38.90px;top:217.00px;font-size:13.2px;line-height:1;white-space:nowrap;color:#000;font-weight:bold;font-family:'Liberation Sans', sans-serif;transform-origin:0 0;transform:scaleX(0.8386);-webkit-text-stroke:0.3px #000;">STT</div><div class="tx" id="t85" style="position:absolute;left:108.00px;top:217.00px;font-size:13.2px;line-height:1;white-space:nowrap;color:#000;font-weight:bold;font-family:'Liberation Sans', sans-serif;transform-origin:0 0;transform:scaleX(0.9454);-webkit-text-stroke:0.3px #000;">Hàng hóa</div><div class="tx" id="t86" style="position:absolute;left:218.40px;top:217.00px;font-size:13.2px;line-height:1;white-space:nowrap;color:#000;font-weight:bold;font-family:'Liberation Sans', sans-serif;transform-origin:0 0;transform:scaleX(0.9504);-webkit-text-stroke:0.3px #000;">Tổng số lượng</div><div class="tx" id="t87" style="position:absolute;left:324.30px;top:217.00px;font-size:13.2px;line-height:1;white-space:nowrap;color:#000;font-weight:bold;font-family:'Liberation Sans', sans-serif;transform-origin:0 0;transform:scaleX(0.9840);-webkit-text-stroke:0.3px #000;">Số lượng đã bán</div><div class="tx" id="t88" style="position:absolute;left:62.26px;top:237.00px;font-size:13.2px;line-height:1;white-space:nowrap;color:#000;font-weight:normal;font-family:'Liberation Sans', sans-serif;transform-origin:0 0;-webkit-text-stroke:0.3px #000;">1</div><div class="tx" id="t89" style="position:absolute;left:75.30px;top:237.00px;font-size:13.2px;line-height:1;white-space:nowrap;color:#000;font-weight:normal;font-family:'Liberation Sans', sans-serif;transform-origin:0 0;transform:scaleX(1.0375);-webkit-text-stroke:0.3px #000;">Bút bi</div><div class="tx" id="t90" style="position:absolute;left:297.40px;top:237.00px;font-size:13.2px;line-height:1;white-space:nowrap;color:#000;font-weight:normal;font-family:'Liberation Sans', sans-serif;transform-origin:0 0;transform:scaleX(1.0084);-webkit-text-stroke:0.3px #000;">200</div><div class="tx" id="t91" style="position:absolute;left:408.20px;top:237.00px;font-size:13.2px;line-height:1;white-space:nowrap;color:#000;font-weight:normal;font-family:'Liberation Sans', sans-serif;transform-origin:0 0;transform:scaleX(1.0084);-webkit-text-stroke:0.3px #000;">124</div><div class="tx" id="t92" style="position:absolute;left:62.26px;top:257.00px;font-size:13.2px;line-height:1;white-space:nowrap;color:#000;font-weight:normal;font-family:'Liberation Sans', sans-serif;transform-origin:0 0;-webkit-text-stroke:0.3px #000;">2</div><div class="tx" id="t93" style="position:absolute;left:75.30px;top:257.00px;font-size:13.2px;line-height:1;white-space:nowrap;color:#000;font-weight:normal;font-family:'Liberation Sans', sans-serif;transform-origin:0 0;transform:scaleX(1.0246);-webkit-text-stroke:0.3px #000;">Bút đánh dấu</div><div class="tx" id="t94" style="position:absolute;left:297.40px;top:257.00px;font-size:13.2px;line-height:1;white-space:nowrap;color:#000;font-weight:normal;font-family:'Liberation Sans', sans-serif;transform-origin:0 0;transform:scaleX(1.0084);-webkit-text-stroke:0.3px #000;">120</div><div class="tx" id="t95" style="position:absolute;left:415.60px;top:257.00px;font-size:13.2px;line-height:1;white-space:nowrap;color:#000;font-weight:normal;font-family:'Liberation Sans', sans-serif;transform-origin:0 0;transform:scaleX(1.0087);-webkit-text-stroke:0.3px #000;">10</div><div class="tx" id="t96" style="position:absolute;left:62.26px;top:277.00px;font-size:13.2px;line-height:1;white-space:nowrap;color:#000;font-weight:normal;font-family:'Liberation Sans', sans-serif;transform-origin:0 0;-webkit-text-stroke:0.3px #000;">3</div><div class="tx" id="t97" style="position:absolute;left:75.30px;top:277.00px;font-size:13.2px;line-height:1;white-space:nowrap;color:#000;font-weight:normal;font-family:'Liberation Sans', sans-serif;transform-origin:0 0;transform:scaleX(0.9912);-webkit-text-stroke:0.3px #000;">Bút chì</div><div class="tx" id="t98" style="position:absolute;left:297.40px;top:277.00px;font-size:13.2px;line-height:1;white-space:nowrap;color:#000;font-weight:normal;font-family:'Liberation Sans', sans-serif;transform-origin:0 0;transform:scaleX(1.0084);-webkit-text-stroke:0.3px #000;">460</div><div class="tx" id="t99" style="position:absolute;left:408.20px;top:277.00px;font-size:13.2px;line-height:1;white-space:nowrap;color:#000;font-weight:normal;font-family:'Liberation Sans', sans-serif;transform-origin:0 0;transform:scaleX(1.0084);-webkit-text-stroke:0.3px #000;">245</div><div class="tx" id="t100" style="position:absolute;left:62.26px;top:297.00px;font-size:13.2px;line-height:1;white-space:nowrap;color:#000;font-weight:normal;font-family:'Liberation Sans', sans-serif;transform-origin:0 0;-webkit-text-stroke:0.3px #000;">4</div><div class="tx" id="t101" style="position:absolute;left:75.30px;top:297.00px;font-size:13.2px;line-height:1;white-space:nowrap;color:#000;font-weight:normal;font-family:'Liberation Sans', sans-serif;transform-origin:0 0;transform:scaleX(0.9416);-webkit-text-stroke:0.3px #000;">Tẩy</div><div class="tx" id="t102" style="position:absolute;left:297.40px;top:297.00px;font-size:13.2px;line-height:1;white-space:nowrap;color:#000;font-weight:normal;font-family:'Liberation Sans', sans-serif;transform-origin:0 0;transform:scaleX(1.0084);-webkit-text-stroke:0.3px #000;">300</div><div class="tx" id="t103" style="position:absolute;left:408.20px;top:297.00px;font-size:13.2px;line-height:1;white-space:nowrap;color:#000;font-weight:normal;font-family:'Liberation Sans', sans-serif;transform-origin:0 0;transform:scaleX(1.0084);-webkit-text-stroke:0.3px #000;">124</div><div class="tx" id="t104" style="position:absolute;left:62.26px;top:317.00px;font-size:13.2px;line-height:1;white-space:nowrap;color:#000;font-weight:normal;font-family:'Liberation Sans', sans-serif;transform-origin:0 0;-webkit-text-stroke:0.3px #000;">5</div><div class="tx" id="t105" style="position:absolute;left:75.30px;top:317.00px;font-size:13.2px;line-height:1;white-space:nowrap;color:#000;font-weight:normal;font-family:'Liberation Sans', sans-serif;transform-origin:0 0;transform:scaleX(0.9780);-webkit-text-stroke:0.3px #000;">Thước</div><div class="tx" id="t106" style="position:absolute;left:297.40px;top:317.00px;font-size:13.2px;line-height:1;white-space:nowrap;color:#000;font-weight:normal;font-family:'Liberation Sans', sans-serif;transform-origin:0 0;transform:scaleX(1.0084);-webkit-text-stroke:0.3px #000;">260</div><div class="tx" id="t107" style="position:absolute;left:408.20px;top:317.00px;font-size:13.2px;line-height:1;white-space:nowrap;color:#000;font-weight:normal;font-family:'Liberation Sans', sans-serif;transform-origin:0 0;transform:scaleX(1.0084);-webkit-text-stroke:0.3px #000;">145</div><div style="position:absolute;left:434px;top:253px;width:111px;height:80px;background:#c6c6c6;"></div><div class="tx" id="t108" style="position:absolute;left:514.60px;top:237.00px;font-size:13.2px;line-height:1;white-space:nowrap;color:#000;font-weight:normal;font-family:'Liberation Sans', sans-serif;transform-origin:0 0;transform:scaleX(1.0907);-webkit-text-stroke:0.3px #000;">0.62</div><div class="tx" id="t109" style="position:absolute;left:468.40px;top:257.00px;font-size:13.2px;line-height:1;white-space:nowrap;color:#000;font-weight:normal;font-family:'Liberation Sans', sans-serif;transform-origin:0 0;transform:scaleX(0.9634);-webkit-text-stroke:0.3px #000;">0.083333333</div><div class="tx" id="t110" style="position:absolute;left:468.40px;top:277.00px;font-size:13.2px;line-height:1;white-space:nowrap;color:#000;font-weight:normal;font-family:'Liberation Sans', sans-serif;transform-origin:0 0;transform:scaleX(0.9634);-webkit-text-stroke:0.3px #000;">0.532608696</div><div class="tx" id="t111" style="position:absolute;left:468.40px;top:297.00px;font-size:13.2px;line-height:1;white-space:nowrap;color:#000;font-weight:normal;font-family:'Liberation Sans', sans-serif;transform-origin:0 0;transform:scaleX(0.9634);-webkit-text-stroke:0.3px #000;">0.413333333</div><div class="tx" id="t112" style="position:absolute;left:468.40px;top:317.00px;font-size:13.2px;line-height:1;white-space:nowrap;color:#000;font-weight:normal;font-family:'Liberation Sans', sans-serif;transform-origin:0 0;transform:scaleX(0.9634);-webkit-text-stroke:0.3px #000;">0.557692308</div><div class="tx" id="t113" style="position:absolute;left:436.40px;top:217.00px;font-size:13.2px;line-height:1;white-space:nowrap;color:#000;font-weight:bold;font-family:'Liberation Sans', sans-serif;transform-origin:0 0;transform:scaleX(0.9839);-webkit-text-stroke:0.3px #000;">% số hàng đã bán</div><div style="position:absolute;left:25px;top:212px;width:679px;height:1px;background:#000;"></div><div style="position:absolute;left:25px;top:232px;width:679px;height:1px;background:#000;"></div><div style="position:absolute;left:25px;top:252px;width:679px;height:1px;background:#000;"></div><div style="position:absolute;left:25px;top:272px;width:679px;height:1px;background:#000;"></div><div style="position:absolute;left:25px;top:292px;width:679px;height:1px;background:#000;"></div><div style="position:absolute;left:25px;top:312px;width:679px;height:1px;background:#000;"></div><div style="position:absolute;left:25px;top:332px;width:679px;height:1px;background:#000;"></div><div style="position:absolute;left:25px;top:352px;width:679px;height:1px;background:#000;"></div><div style="position:absolute;left:72px;top:212px;width:1px;height:141px;background:#000;"></div><div style="position:absolute;left:203px;top:212px;width:1px;height:141px;background:#000;"></div><div style="position:absolute;left:321px;top:212px;width:1px;height:141px;background:#000;"></div><div style="position:absolute;left:433px;top:212px;width:1px;height:141px;background:#000;"></div><div style="position:absolute;left:545px;top:212px;width:1px;height:141px;background:#000;"></div><div style="position:absolute;left:703px;top:212px;width:1px;height:141px;background:#000;"></div><div style="position:absolute;left:25px;top:212px;width:1px;height:141px;background:#000;"></div><div style="position:absolute;left:433px;top:231px;width:114px;height:103px;border:2px solid #217346;box-sizing:border-box;"></div><div style="position:absolute;left:24px;top:233px;width:2px;height:100px;background:#217346;"></div><div style="position:absolute;left:433px;top:191px;width:113px;height:2px;background:#217346;"></div><div style="position:absolute;left:26px;top:433px;width:411px;height:139px;background:#ffffff;"></div><div style="position:absolute;left:26px;top:448px;width:411px;height:1px;background:#d9d9d9;"></div><div style="position:absolute;left:26px;top:468px;width:411px;height:1px;background:#d9d9d9;"></div><div style="position:absolute;left:26px;top:488px;width:411px;height:1px;background:#d9d9d9;"></div><div style="position:absolute;left:26px;top:507px;width:411px;height:1px;background:#d9d9d9;"></div><div style="position:absolute;left:26px;top:527px;width:411px;height:1px;background:#d9d9d9;"></div><div style="position:absolute;left:26px;top:549px;width:411px;height:1px;background:#d9d9d9;"></div><div style="position:absolute;left:72px;top:433px;width:1px;height:139px;background:#d9d9d9;"></div><div style="position:absolute;left:203px;top:433px;width:1px;height:139px;background:#d9d9d9;"></div><div style="position:absolute;left:321px;top:433px;width:1px;height:139px;background:#d9d9d9;"></div><div style="position:absolute;left:433px;top:433px;width:1px;height:139px;background:#d9d9d9;"></div><div class="tx" id="t114" style="position:absolute;left:68.40px;top:442.00px;font-size:23px;line-height:1;white-space:nowrap;color:#000;font-weight:bold;font-family:'Liberation Sans', sans-serif;transform-origin:0 0;transform:scaleX(0.9847);-webkit-text-stroke:0.5px #000;">Bước 2: di chuột kéo công thức ở</div><div style="position:absolute;left:68.4px;top:464.3px;width:86.4px;height:2.2px;background:#000;"></div><div class="tx" id="t115" style="position:absolute;left:68.40px;top:475.00px;font-size:23px;line-height:1;white-space:nowrap;color:#000;font-weight:bold;font-family:'Liberation Sans', sans-serif;transform-origin:0 0;transform:scaleX(0.9838);-webkit-text-stroke:0.5px #000;">hàng trên xuống các hàng dưới</div><div style="position:absolute;left:533px;top:204px;width:260px;height:55px;box-sizing:border-box;background:#fff;border:1px solid #c8c8c8;box-shadow:1px 1px 2px rgba(0,0,0,0.12)"></div><div style="position:absolute;left:536px;top:208px;width:110px;height:24px;box-sizing:border-box;border:1px solid #c6c6c6;background:#fff"></div><div style="position:absolute;left:599.5px;top:209px;width:1px;height:22px;background:#d4d4d4;"></div><div class="tx" id="t116" style="position:absolute;left:539.50px;top:213.00px;font-size:12.5px;line-height:1;white-space:nowrap;color:#444;font-weight:normal;font-family:'Liberation Sans', sans-serif;transform-origin:0 0;transform:scaleX(0.9397);">Calibri</div><svg style="position:absolute;left:589px;top:218.0px" width="6" height="3" viewBox="0 0 6 3"><path d="M0 0H6L3 3Z" fill="#555"/></svg><div class="tx" id="t117" style="position:absolute;left:604.00px;top:213.00px;font-size:12.5px;line-height:1;white-space:nowrap;color:#444;font-weight:normal;font-family:'Liberation Sans', sans-serif;transform-origin:0 0;transform:scaleX(0.7702);">11</div><svg style="position:absolute;left:635.3px;top:218.0px" width="6" height="3" viewBox="0 0 6 3"><path d="M0 0H6L3 3Z" fill="#555"/></svg><div class="tx" id="t118" style="position:absolute;left:651.80px;top:215.00px;font-size:13.5px;line-height:1;white-space:nowrap;color:#444;font-weight:normal;font-family:'Liberation Sans', sans-serif;transform-origin:0 0;transform:scaleX(1.1092);">A</div><div class="tx" id="t119" style="position:absolute;left:675.00px;top:217.00px;font-size:10.5px;line-height:1;white-space:nowrap;color:#444;font-weight:normal;font-family:'Liberation Sans', sans-serif;transform-origin:0 0;">A</div><svg style="position:absolute;left:714.2px;top:217.5px" width="6" height="3" viewBox="0 0 6 3"><path d="M0 0H6L3 3Z" fill="#666"/></svg><div class="tx" id="t120" style="position:absolute;left:729.90px;top:215.00px;font-size:14px;line-height:1;white-space:nowrap;color:#3a3a3a;font-weight:normal;font-family:'Liberation Sans', sans-serif;transform-origin:0 0;transform:scaleX(0.9235);-webkit-text-stroke:0.3px #3a3a3a;">%</div><div class="tx" id="t121" style="position:absolute;left:753.50px;top:209.00px;font-size:15px;line-height:1;white-space:nowrap;color:#3a3a3a;font-weight:bold;font-family:'Liberation Sans', sans-serif;transform-origin:0 0;transform:scaleX(1.3184);">,</div><div class="tx" id="t122" style="position:absolute;left:542.50px;top:237.00px;font-size:12px;line-height:1;white-space:nowrap;color:#444;font-weight:bold;font-family:'Liberation Sans', sans-serif;transform-origin:0 0;transform:scaleX(0.8649);">B</div><div class="tx" id="t123" style="position:absolute;left:564.50px;top:237.00px;font-size:12.5px;line-height:1;white-space:nowrap;color:#444;font-weight:normal;font-family:'Liberation Serif', serif;transform-origin:0 0;transform:scaleX(1.7738);font-style:italic;">I</div><svg style="position:absolute;left:626.4px;top:241.5px" width="6" height="3" viewBox="0 0 6 3"><path d="M0 0H6L3 3Z" fill="#666"/></svg><div class="tx" id="t124" style="position:absolute;left:643.30px;top:237.00px;font-size:12.5px;line-height:1;white-space:nowrap;color:#444;font-weight:bold;font-family:'Liberation Sans', sans-serif;transform-origin:0 0;transform:scaleX(0.8858);">A</div><svg style="position:absolute;left:660.7px;top:241.5px" width="6" height="3" viewBox="0 0 6 3"><path d="M0 0H6L3 3Z" fill="#666"/></svg><svg style="position:absolute;left:694.6px;top:241.5px" width="6" height="3" viewBox="0 0 6 3"><path d="M0 0H6L3 3Z" fill="#666"/></svg><svg style="position:absolute;left:0;top:0" width="1139" height="697"><path d="M660.5 215.4l2.4-2.2 2.4 2.2z" fill="#555"/><path d="M682 213h5l-2.5 2.3z" fill="#555"/><rect x="693.5" y="212.5" width="15" height="8.5" fill="#d6e3ee" stroke="#3f5f7f" stroke-width="1.6"/><circle cx="699.5" cy="216.7" r="2.2" fill="#3f5f7f"/><rect x="699" y="219.5" width="9.5" height="2.3" fill="#f0d49a"/><rect x="697" y="222.5" width="10" height="2.3" fill="#e8c37c"/><rect x="699" y="225.5" width="9" height="2.3" fill="#f0d49a"/><path d="M771.5 212.5h14.5v14h-14.5zM771.5 215.5h14.5M771.5 223.5h14.5M778.5 212.5v3M778.5 223.5v3" fill="none" stroke="#555"/><path d="M774 219.5h9.5" stroke="#444"/><path d="M773.5 219.5l2-1.6v3.2zM784 219.5l-2-1.6v3.2z" fill="#444"/><path d="M584 239.2h14.5M585.5 242.1h11.5M584 245.2h14.5M585.5 248.5h11.5" stroke="#555" stroke-width="1.1"/><rect x="604.4" y="248" width="17" height="4" fill="#f2f23c"/><path d="M608.7 242l5-5 5 5-5 5z" fill="#fff" stroke="#444" stroke-width="1.4"/><path d="M611.7 238.9v-2.4c0-1.1.9-1.7 1.9-1.7s1.9.6 1.9 1.7v2.6" fill="none" stroke="#444" stroke-width="1.2"/><path d="M618.4 240c2.2.5 3.5 2.2 3.5 4.2 0 1.3-.7 2.3-1.5 2.3-.6-1.2-1.2-2.3-2.6-3.3z" fill="#3c5a78"/><rect x="639" y="248.5" width="16" height="3.2" fill="#c00000"/><path d="M674 237.5h13M674 243.3h13M674 237.5v11.5M680.5 237.5v11.5M687 237.5v11.5" stroke="#777" stroke-width="1" stroke-dasharray="1 1"/><path d="M673.7 249.2h13.5" stroke="#444" stroke-width="1.2"/><text x="711" y="243.5" font-family="Liberation Sans" font-size="9.5" fill="#444">.0</text><text x="707.3" y="251" font-family="Liberation Sans" font-size="9.5" fill="#444">.00</text><path d="M708 239.8h4.5" stroke="#4a7aa8" stroke-width="1.2"/><path d="M707 239.8l2.5-2v4z" fill="#4a7aa8"/><text x="729.5" y="243.5" font-family="Liberation Sans" font-size="9.5" fill="#444">.00</text><text x="735.3" y="251" font-family="Liberation Sans" font-size="9.5" fill="#444">.0</text><path d="M729 247.5h5" stroke="#4a7aa8" stroke-width="1.2"/><path d="M735.5 247.5l-2.5-2v4z" fill="#4a7aa8"/><g transform="translate(760.8 242) rotate(-40)"><rect x="0.3" y="-1.9" width="7.5" height="3.8" rx="1" fill="#555"/><path d="M-7.5 -3.2h7.5v6.4h-7.5c-.7 0-1-.5-1-1v-4.4c0-.5.3-1 1-1z" fill="#dcc48e"/><path d="M-.7 -3.2v6.4" stroke="#c9ad6e" stroke-width="1.1"/></g></svg><div style="position:absolute;left:532px;top:275px;width:205px;height:431px;box-sizing:border-box;background:#fff;border:1px solid #c6c6c6;box-shadow:2px 2px 3px rgba(0,0,0,0.12)"></div><div style="position:absolute;left:558px;top:325px;width:177px;height:22px;background:#ececec;"></div><div style="position:absolute;left:534px;top:603px;width:201px;height:24px;background:#c6c6c6;"></div><div style="position:absolute;left:567px;top:401px;width:168px;height:1px;background:#e2e2e2;"></div><div style="position:absolute;left:567px;top:427px;width:168px;height:1px;background:#e2e2e2;"></div><div style="position:absolute;left:567px;top:501px;width:168px;height:1px;background:#e2e2e2;"></div><div style="position:absolute;left:567px;top:575px;width:168px;height:1px;background:#e2e2e2;"></div><div style="position:absolute;left:567px;top:601px;width:168px;height:1px;background:#e2e2e2;"></div><div class="tx" id="t125" style="position:absolute;left:565.50px;top:283.00px;font-size:12px;line-height:1;white-space:nowrap;color:#444;font-weight:normal;font-family:'Liberation Sans', sans-serif;transform-origin:0 0;transform:scaleX(0.9632);">Cu<u>t</u></div><div class="tx" id="t126" style="position:absolute;left:565.50px;top:307.00px;font-size:12px;line-height:1;white-space:nowrap;color:#444;font-weight:normal;font-family:'Liberation Sans', sans-serif;transform-origin:0 0;transform:scaleX(0.9810);"><u>C</u>opy</div><div class="tx" id="t127" style="position:absolute;left:565.50px;top:383.00px;font-size:12px;line-height:1;white-space:nowrap;color:#444;font-weight:normal;font-family:'Liberation Sans', sans-serif;transform-origin:0 0;transform:scaleX(0.9172);">Paste <u>S</u>pecial...</div><div class="tx" id="t128" style="position:absolute;left:565.50px;top:409.00px;font-size:12px;line-height:1;white-space:nowrap;color:#444;font-weight:normal;font-family:'Liberation Sans', sans-serif;transform-origin:0 0;transform:scaleX(0.9768);">Smart <u>L</u>ookup</div><div class="tx" id="t129" style="position:absolute;left:565.50px;top:435.00px;font-size:12px;line-height:1;white-space:nowrap;color:#444;font-weight:normal;font-family:'Liberation Sans', sans-serif;transform-origin:0 0;transform:scaleX(0.9343);"><u>I</u>nsert...</div><div class="tx" id="t130" style="position:absolute;left:565.50px;top:459.00px;font-size:12px;line-height:1;white-space:nowrap;color:#444;font-weight:normal;font-family:'Liberation Sans', sans-serif;transform-origin:0 0;transform:scaleX(0.9261);"><u>D</u>elete...</div><div class="tx" id="t131" style="position:absolute;left:565.50px;top:483.00px;font-size:12px;line-height:1;white-space:nowrap;color:#444;font-weight:normal;font-family:'Liberation Sans', sans-serif;transform-origin:0 0;transform:scaleX(0.9705);">Clear Co<u>n</u>tents</div><div class="tx" id="t132" style="position:absolute;left:565.50px;top:509.00px;font-size:12px;line-height:1;white-space:nowrap;color:#444;font-weight:normal;font-family:'Liberation Sans', sans-serif;transform-origin:0 0;transform:scaleX(0.9763);"><u>Q</u>uick Analysis</div><div class="tx" id="t133" style="position:absolute;left:565.50px;top:533.00px;font-size:12px;line-height:1;white-space:nowrap;color:#444;font-weight:normal;font-family:'Liberation Sans', sans-serif;transform-origin:0 0;transform:scaleX(0.9555);">Filt<u>e</u>r</div><div class="tx" id="t134" style="position:absolute;left:565.50px;top:557.00px;font-size:12px;line-height:1;white-space:nowrap;color:#444;font-weight:normal;font-family:'Liberation Sans', sans-serif;transform-origin:0 0;transform:scaleX(0.9434);">S<u>o</u>rt</div><div class="tx" id="t135" style="position:absolute;left:565.50px;top:583.00px;font-size:12px;line-height:1;white-space:nowrap;color:#444;font-weight:normal;font-family:'Liberation Sans', sans-serif;transform-origin:0 0;transform:scaleX(1.0050);">Insert Co<u>m</u>ment</div><div class="tx" id="t136" style="position:absolute;left:565.50px;top:609.00px;font-size:12px;line-height:1;white-space:nowrap;color:#444;font-weight:normal;font-family:'Liberation Sans', sans-serif;transform-origin:0 0;transform:scaleX(0.9586);"><u>F</u>ormat Cells...</div><div class="tx" id="t137" style="position:absolute;left:565.50px;top:633.00px;font-size:12px;line-height:1;white-space:nowrap;color:#444;font-weight:normal;font-family:'Liberation Sans', sans-serif;transform-origin:0 0;transform:scaleX(0.9916);">Pic<u>k</u> From Drop-down List...</div><div class="tx" id="t138" style="position:absolute;left:565.50px;top:657.00px;font-size:12px;line-height:1;white-space:nowrap;color:#444;font-weight:normal;font-family:'Liberation Sans', sans-serif;transform-origin:0 0;transform:scaleX(0.9694);">Define N<u>a</u>me...</div><div class="tx" id="t139" style="position:absolute;left:565.50px;top:681.00px;font-size:12px;line-height:1;white-space:nowrap;color:#444;font-weight:normal;font-family:'Liberation Sans', sans-serif;transform-origin:0 0;transform:scaleX(0.9876);">Hyperl<u>i</u>nk...</div><div class="tx" id="t140" style="position:absolute;left:567.60px;top:330.00px;font-size:12px;line-height:1;white-space:nowrap;color:#555;font-weight:bold;font-family:'Liberation Sans', sans-serif;transform-origin:0 0;transform:scaleX(0.9258);">Paste Options:</div><svg style="position:absolute;left:0;top:0" width="1139" height="697"><path d="M722.5 535.5l4 3.2-4 3.2z" fill="#555"/><path d="M722.5 559.5l4 3.2-4 3.2z" fill="#555"/><path d="M541.8 282L548.4 290.6M550.3 282L543.7 290.6" stroke="#505050" stroke-width="2.1"/><circle cx="542" cy="293.2" r="2.6" fill="none" stroke="#5b6f80" stroke-width="1.6"/><circle cx="550" cy="293.2" r="2.6" fill="none" stroke="#5b6f80" stroke-width="1.6"/><path d="M538.5 306.5h6l2 2v9h-8z" fill="#fff" stroke="#555"/><path d="M540 310.5h4M540 312.5h4M540 314.5h4" stroke="#555"/><path d="M543.5 310.5h6.5l3 3v6h-9.5z" fill="#fff" stroke="#555"/><path d="M545.5 314.5h5M545.5 316.5h5" stroke="#555"/><rect x="539" y="331" width="11" height="12.5" fill="#e8c37c"/><rect x="541.5" y="329.5" width="6" height="3" fill="#6b6b6b"/><path d="M545.5 335.5h5l3 3v5.5h-8z" fill="#fff" stroke="#555"/><rect x="564.5" y="354" width="16" height="18" fill="#e8c37c"/><rect x="564.5" y="354" width="16" height="3" fill="#f0d49a"/><rect x="567.5" y="352.5" width="10" height="3.5" fill="#6b6b6b"/><rect x="570.5" y="351" width="4" height="2.5" rx="1" fill="#6b6b6b"/><path d="M574.5 361.5h6.5l4 4v9h-10.5z" fill="#fff" stroke="#555"/><path d="M581 361.5v4h4" fill="none" stroke="#555"/><circle cx="547.5" cy="413.3" r="5.4" fill="#fff" stroke="#4f5356" stroke-width="2"/><path d="M543.6 417.3l-4.6 4.6" stroke="#4b6a98" stroke-width="2.6" stroke-linecap="round"/><rect x="546.7" y="412.3" width="1.7" height="4" fill="#444"/><rect x="546.7" y="409.8" width="1.7" height="1.6" fill="#444"/><path d="M543.5 508.5h8.5v13h-12.5v-4" fill="none" stroke="#555"/><rect x="543.5" y="508.5" width="8.5" height="1.5" fill="#555"/><path d="M544 512.7h3M543.3 515.3h7M543.3 518h6" stroke="#555" stroke-width="1.3"/><path d="M543.3 518h6" stroke="#5a8fb8" stroke-width="1.4"/><path d="M541.5 507l-2.5 5h2l-1.5 4" fill="none" stroke="#e0bd7d" stroke-width="1.2"/><path d="M542.5 584.5h10v8h-6.5l-3.5 3v-3h-2" fill="none" stroke="#555"/><path d="M540.5 581v6M537.5 584h6" stroke="#3e7f6e" stroke-width="1.5"/><rect x="539.5" y="607.5" width="13" height="15" fill="#fff" stroke="#555"/><rect x="539.5" y="607.5" width="13" height="2.3" fill="#555"/><path d="M541.5 613.5h2M545 613.5h5M541.5 617.5h2M545 617.5h5" stroke="#555" stroke-width="1.1"/><path d="M540 688a6 6 0 0 1 12 0" fill="none" stroke="#666" stroke-width="1.2"/><path d="M546 682v6M541 685.5h10" stroke="#666" stroke-width="1"/><rect x="538.5" y="689.5" width="8" height="5" rx="2.5" fill="none" stroke="#3d6d9b" stroke-width="1.8"/><rect x="545.5" y="689.5" width="8" height="5" rx="2.5" fill="none" stroke="#3d6d9b" stroke-width="1.8"/></svg><div style="position:absolute;left:0px;top:655px;width:533px;height:28px;background:#e6e6e6;"></div><div style="position:absolute;left:737px;top:655px;width:402px;height:28px;background:#e6e6e6;"></div><div style="position:absolute;left:0px;top:653px;width:533px;height:2px;background:#ffffff;"></div><div style="position:absolute;left:737px;top:653px;width:402px;height:2px;background:#ffffff;"></div><div style="position:absolute;left:0px;top:655px;width:533px;height:1px;background:#a8a8a8;"></div><div style="position:absolute;left:737px;top:655px;width:402px;height:1px;background:#a8a8a8;"></div><div style="position:absolute;left:0px;top:683px;width:533px;height:1px;background:#d6d6d6;"></div><div style="position:absolute;left:737px;top:683px;width:402px;height:1px;background:#d6d6d6;"></div><svg style="position:absolute;left:0;top:0" width="1139" height="697"><path d="M31.5 665.5l-3 3 3 3z" fill="#c0c0c0"/><path d="M57 665.5l3 3-3 3z" fill="#c0c0c0"/><circle cx="206.2" cy="669" r="7.5" fill="none" stroke="#666" stroke-width="1.1"/><path d="M202.2 669h8M206.2 665v8" stroke="#555" stroke-width="1.4"/><path d="M819.5 664v1.5M819.5 668.3v1.5M819.5 672.6v1.5" stroke="#aaa" stroke-width="1.6"/></svg><div style="position:absolute;left:100px;top:655px;width:65px;height:24px;background:#ffffff;"></div><div style="position:absolute;left:100px;top:655px;width:1px;height:24px;background:#9a9a9a;"></div><div style="position:absolute;left:164px;top:655px;width:1px;height:24px;background:#9a9a9a;"></div><div style="position:absolute;left:100px;top:677.5px;width:65px;height:2px;background:#1e6b41;"></div><div class="tx" id="t141" style="position:absolute;left:112.20px;top:663.00px;font-size:12.5px;line-height:1;white-space:nowrap;color:#1f6b43;font-weight:bold;font-family:'Liberation Sans', sans-serif;transform-origin:0 0;transform:scaleX(0.9707);">Sheet1</div><div style="position:absolute;left:836px;top:663px;width:305px;height:14px;box-sizing:border-box;background:#fff;border:1px solid #c6c6c6"></div><div style="position:absolute;left:836px;top:663px;width:16px;height:14px;box-sizing:border-box;border:1px solid #c6c6c6;background:#fafafa"></div><svg style="position:absolute;left:841px;top:666px" width="6" height="8"><path d="M5 0.5v7l-4-3.5z" fill="#555"/></svg><div style="position:absolute;left:0px;top:683px;width:533px;height:14px;background:#f3f3f3;"></div><div style="position:absolute;left:737px;top:683px;width:402px;height:14px;background:#f3f3f3;"></div><div class="tx" id="t142" style="position:absolute;left:7.40px;top:689.00px;font-size:12.5px;line-height:1;white-space:nowrap;color:#444;font-weight:normal;font-family:'Liberation Sans', sans-serif;transform-origin:0 0;transform:scaleX(0.8024);">Ready</div><div class="tx" id="t143" style="position:absolute;left:784.00px;top:689.00px;font-size:12.5px;line-height:1;white-space:nowrap;color:#444;font-weight:normal;font-family:'Liberation Sans', sans-serif;transform-origin:0 0;transform:scaleX(0.8901);">Average: 0.441393534</div><div class="tx" id="t144" style="position:absolute;left:910.60px;top:689.00px;font-size:12.5px;line-height:1;white-space:nowrap;color:#444;font-weight:normal;font-family:'Liberation Sans', sans-serif;transform-origin:0 0;transform:scaleX(0.9394);">Count: 5</div><div class="tx" id="t145" style="position:absolute;left:971.00px;top:689.00px;font-size:12.5px;line-height:1;white-space:nowrap;color:#444;font-weight:normal;font-family:'Liberation Sans', sans-serif;transform-origin:0 0;transform:scaleX(0.8612);">Sum: 2.20696767</div><div style="position:absolute;left:1075px;top:683px;width:36px;height:14px;background:#d2d2d2;"></div><svg style="position:absolute;left:0;top:0" width="1139" height="697"><path d="M1086.5 689.5h13v8h-13zM1086.5 693.5h13M1090.5 689.5v8M1095.5 689.5v8" fill="none" stroke="#555"/><path d="M1119.5 687.5h11v10h-11zM1121.5 690.5h7M1121.5 693h7M1121.5 695.5h7" fill="none" stroke="#555"/></svg></div></body></html>
